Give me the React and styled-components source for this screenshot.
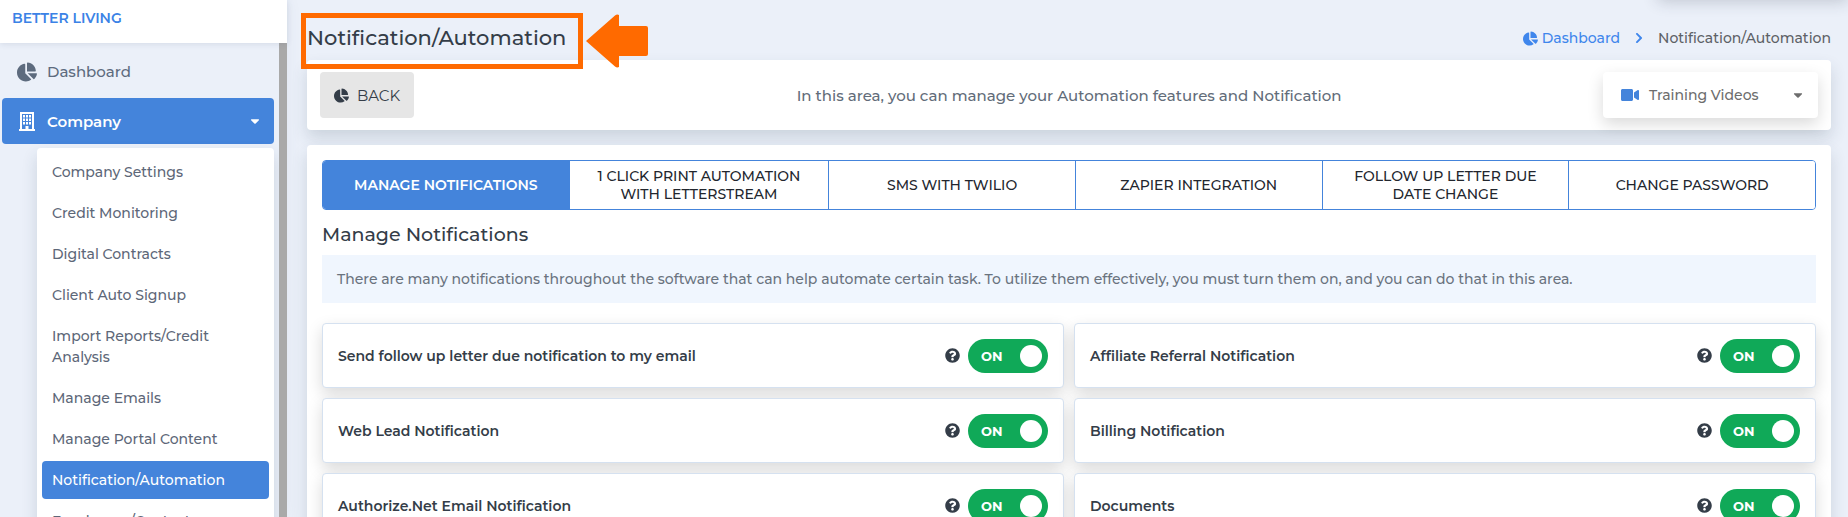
import styled, { createGlobalStyle } from "styled-components";
import { FaChartPie, FaChevronRight, FaCaretDown, FaQuestionCircle, FaVideo } from "react-icons/fa";

const menu = [
  "Company Settings",
  "Credit Monitoring",
  "Digital Contracts",
  "Client Auto Signup",
  "Import Reports/Credit Analysis",
  "Manage Emails",
  "Manage Portal Content",
  "Notification/Automation",
  "Employees/Contacts",
];

const tabs = [
  "MANAGE NOTIFICATIONS",
  "1 CLICK PRINT AUTOMATION WITH LETTERSTREAM",
  "SMS WITH TWILIO",
  "ZAPIER INTEGRATION",
  "FOLLOW UP LETTER DUE DATE CHANGE",
  "CHANGE PASSWORD",
];

const notifications = [
  "Send follow up letter due notification to my email",
  "Affiliate Referral Notification",
  "Web Lead Notification",
  "Billing Notification",
  "Authorize.Net Email Notification",
  "Documents",
];

function BuildingIcon() {
  return (
    <svg viewBox="0 0 20 20" width="20" height="20" fill="currentColor" aria-hidden="true">
      <path
        fillRule="evenodd"
        d="M3 1H17V18H18V20H2V18H3ZM5 3V18H8.500V15H11.500V18H15V3Z"
      />
      <path d="M6 4H8V6.500H6ZM9 4H11V6.500H9ZM12 4H14V6.500H12ZM6 7.500H8V10H6ZM9 7.500H11V10H9ZM12 7.500H14V10H12ZM6 11H8V13.500H6ZM9 11H11V13.500H9ZM12 11H14V13.500H12Z" />
    </svg>
  );
}

export default function App() {
  return (
    <Page>
      <GlobalStyle />
      <Sidebar>
        <Brand href="#">BETTER LIVING</Brand>
        <Nav>
          <NavLink href="#">
            <FaChartPie />
            <span>Dashboard</span>
          </NavLink>
          <NavButton type="button">
            <BuildingIcon />
            <span>Company</span>
            <FaCaretDown />
          </NavButton>
          <Submenu>
            {menu.map((item) => (
              <SubmenuLink href="#" key={item} $active={item === "Notification/Automation"}>
                {item}
              </SubmenuLink>
            ))}
          </Submenu>
        </Nav>
      </Sidebar>

      <Main>
        <TopShade />
        <Header>
          <Title>
            Notification/Automation
            <Highlight />
            <Arrow viewBox="0 0 62 54" aria-hidden="true">
              <path d="M0 27 29 1.500Q31 0 33 1V12H60Q62 12 62 14V40Q62 42 60 42H33V53Q31 54 29 52.500Z" />
            </Arrow>
          </Title>
          <Breadcrumb>
            <a href="#">
              <FaChartPie />
              Dashboard
            </a>
            <FaChevronRight />
            <span>Notification/Automation</span>
          </Breadcrumb>
        </Header>

        <Toolbar>
          <BackButton type="button">
            <FaChartPie />
            BACK
          </BackButton>
          <p>In this area, you can manage your Automation features and Notification</p>
          <VideosButton type="button">
            <FaVideo />
            <span>Training Videos</span>
            <FaCaretDown />
          </VideosButton>
        </Toolbar>

        <Panel>
          <Tabs>
            {tabs.map((tab, i) => (
              <Tab type="button" key={tab} $active={i === 0} $wide={i === 1}>
                {tab}
              </Tab>
            ))}
          </Tabs>
          <Subtitle>Manage Notifications</Subtitle>
          <Info>
            There are many notifications throughout the software that can help automate certain task. To utilize them
            effectively, you must turn them on, and you can do that in this area.
          </Info>
          <Cards>
            {notifications.map((name, i) => (
              <Card key={name}>
                <label htmlFor={`notification-${i}`}>{name}</label>
                <FaQuestionCircle />
                <Toggle>
                  <input id={`notification-${i}`} type="checkbox" defaultChecked />
                  <span>ON</span>
                </Toggle>
              </Card>
            ))}
          </Cards>
        </Panel>
      </Main>
    </Page>
  );
}

const GlobalStyle = createGlobalStyle`
  * {
    box-sizing: border-box;
  }
  body {
    margin: 0;
    background: #ebf0f9;
    color: #343d48;
    font-family: Montserrat, Inter, sans-serif;
    font-size: 14px;
  }
  button {
    font: inherit;
    border: 0;
    cursor: pointer;
  }
  a {
    text-decoration: none;
  }
  svg {
    flex-shrink: 0;
  }
`;

const Page = styled.div`
  display: flex;
  height: 100vh;
  overflow: hidden;
`;

const Sidebar = styled.aside`
  width: 287px;
  flex-shrink: 0;
  display: flex;
  flex-direction: column;
  box-shadow: 0 0 16px rgba(60, 80, 120, 0.06);
`;

const Brand = styled.a`
  padding: 8px 12px 15px;
  background: #fff;
  color: #3b82e6;
  font-weight: 600;
  line-height: 20px;
  box-shadow: 0 1px 6px rgba(40, 60, 90, 0.12);
  z-index: 1;
`;

const Nav = styled.nav`
  flex: 1;
  min-height: 0;
  overflow: hidden;
  padding: 2px 5px 0 2px;
  border-right: 8px solid #a9a9a9;
`;

const NavLink = styled.a`
  display: flex;
  align-items: center;
  gap: 10px;
  height: 53px;
  padding: 0 15px;
  font-size: 15px;
  font-weight: 500;
  color: #5d6b7e;
  svg {
    font-size: 20px;
  }
`;

const NavButton = styled.button`
  display: flex;
  align-items: center;
  gap: 10px;
  width: 100%;
  height: 46px;
  padding: 0 13px 0 15px;
  border-radius: 4px;
  background: #4484db;
  color: #fff;
  font-size: 15px;
  font-weight: 600;
  span {
    flex: 1;
    text-align: left;
  }
  svg:last-child {
    width: 12px;
    font-size: 14px;
  }
`;

const Submenu = styled.div`
  display: flex;
  flex-direction: column;
  gap: 3px;
  margin: 4px 0 0 35px;
  padding: 5px;
  border-radius: 4px;
  background: #fff;
  box-shadow: 0 8px 16px rgba(40, 60, 90, 0.16);
`;

const SubmenuLink = styled.a`
  padding: 9px 10px 8px;
  border-radius: 4px;
  line-height: 21px;
  background: ${(props) => (props.$active ? "#4484db" : "transparent")};
  color: ${(props) => (props.$active ? "#fff" : "#5d6778")};
  font-weight: 500;
`;

const Main = styled.main`
  flex: 1;
  min-width: 0;
  display: flex;
  flex-direction: column;
  position: relative;
  padding: 0 17px 0 20px;
`;

const TopShade = styled.div`
  position: absolute;
  top: -20px;
  right: 0;
  width: 190px;
  height: 17px;
  box-shadow: 0 4px 16px rgba(40, 50, 70, 0.24);
`;

const Header = styled.header`
  display: flex;
  flex-shrink: 0;
  align-items: center;
  justify-content: space-between;
  height: 60px;
  padding-top: 16px;
`;

const Title = styled.h1`
  position: relative;
  z-index: 1;
  margin: 0;
  font-size: 21px;
  font-weight: 500;
  line-height: 26px;
`;

const Highlight = styled.span`
  position: absolute;
  top: -12px;
  left: -6px;
  width: 282px;
  height: 56px;
  border: 5px solid #ff6a00;
`;

const Arrow = styled.svg`
  position: absolute;
  top: -11px;
  left: 279px;
  width: 62px;
  height: 54px;
  fill: #ff6a00;
`;

const Breadcrumb = styled.nav`
  display: flex;
  align-items: center;
  gap: 13px;
  font-weight: 500;
  color: #5d6166;
  a {
    display: flex;
    align-items: center;
    gap: 4px;
    color: #3f86ec;
  }
  a svg {
    font-size: 15px;
  }
  > svg {
    font-size: 12px;
    color: #3f86ec;
  }
`;

const Toolbar = styled.section`
  display: flex;
  flex-shrink: 0;
  align-items: center;
  justify-content: space-between;
  gap: 20px;
  padding: 12px 13px;
  border-radius: 4px;
  background: #fff;
  box-shadow: 0 8px 16px rgba(40, 60, 80, 0.16);
  p {
    flex: 1;
    margin: 0;
    /* keeps the text on the centre line of the whole bar */
    padding-left: 121px;
    text-align: center;
    font-size: 15px;
    font-weight: 500;
    color: #626c79;
  }
`;

const BackButton = styled.button`
  display: flex;
  align-items: center;
  gap: 8px;
  height: 46px;
  padding: 0 14px;
  border-radius: 4px;
  background: #e6e6e6;
  color: #343d48;
  font-size: 15px;
`;

const VideosButton = styled.button`
  display: flex;
  align-items: center;
  gap: 10px;
  width: 215px;
  height: 46px;
  padding: 0 13px 0 18px;
  border-radius: 4px;
  background: #fff;
  color: #6d6d6d;
  font-weight: 500;
  box-shadow: 0 6px 16px rgba(0, 0, 0, 0.15);
  span {
    flex: 1;
    text-align: left;
  }
  svg:first-child {
    font-size: 18px;
    color: #4484db;
  }
`;

const Panel = styled.section`
  flex: 1;
  margin-top: 15px;
  padding: 15px;
  border-radius: 4px 4px 0 0;
  background: #fff;
  box-shadow: 0 8px 16px rgba(40, 60, 80, 0.16);
`;

const Tabs = styled.div`
  display: flex;
  height: 50px;
  border: 1px solid #4484db;
  border-radius: 4px;
  overflow: hidden;
`;

const Tab = styled.button`
  flex: ${(props) => (props.$wide ? 17 : 16)} 1 0;
  padding: 0 20px;
  border-right: 1px solid #4484db;
  background: ${(props) => (props.$active ? "#4484db" : "#fff")};
  color: ${(props) => (props.$active ? "#fff" : "#22262e")};
  font-weight: ${(props) => (props.$active ? 600 : 500)};
  line-height: 18px;
  &:last-child {
    border-right: 0;
  }
`;

const Subtitle = styled.h2`
  margin: 12px 0 8px;
  font-size: 19px;
  font-weight: 500;
  line-height: 25px;
`;

const Info = styled.p`
  margin: 0;
  padding: 14px 15px;
  background: #f0f6fe;
  color: #6a737e;
  font-weight: 500;
  line-height: 20px;
`;

const Cards = styled.div`
  display: grid;
  grid-template-columns: 1fr 1fr;
  gap: 10px;
  margin-top: 20px;
`;

const Card = styled.div`
  display: flex;
  align-items: center;
  gap: 8px;
  height: 65px;
  padding: 0 15px;
  border: 1px solid #d5e1f0;
  border-radius: 4px;
  background: #fff;
  box-shadow: 0 6px 16px rgba(0, 0, 0, 0.15);
  label {
    flex: 1;
    font-weight: 600;
  }
  svg {
    font-size: 15px;
  }
`;

const Toggle = styled.span`
  position: relative;
  width: 80px;
  height: 34px;
  input {
    appearance: none;
    width: 100%;
    height: 100%;
    margin: 0;
    padding: 6px;
    border-radius: 17px;
    background: #10a958;
    cursor: pointer;
  }
  input::before {
    content: "";
    display: block;
    width: 22px;
    height: 22px;
    margin-left: auto;
    border-radius: 50%;
    background: #fff;
  }
  span {
    position: absolute;
    top: 9px;
    left: 13px;
    color: #fff;
    font-size: 13px;
    font-weight: 700;
    line-height: 16px;
    pointer-events: none;
  }
`;
